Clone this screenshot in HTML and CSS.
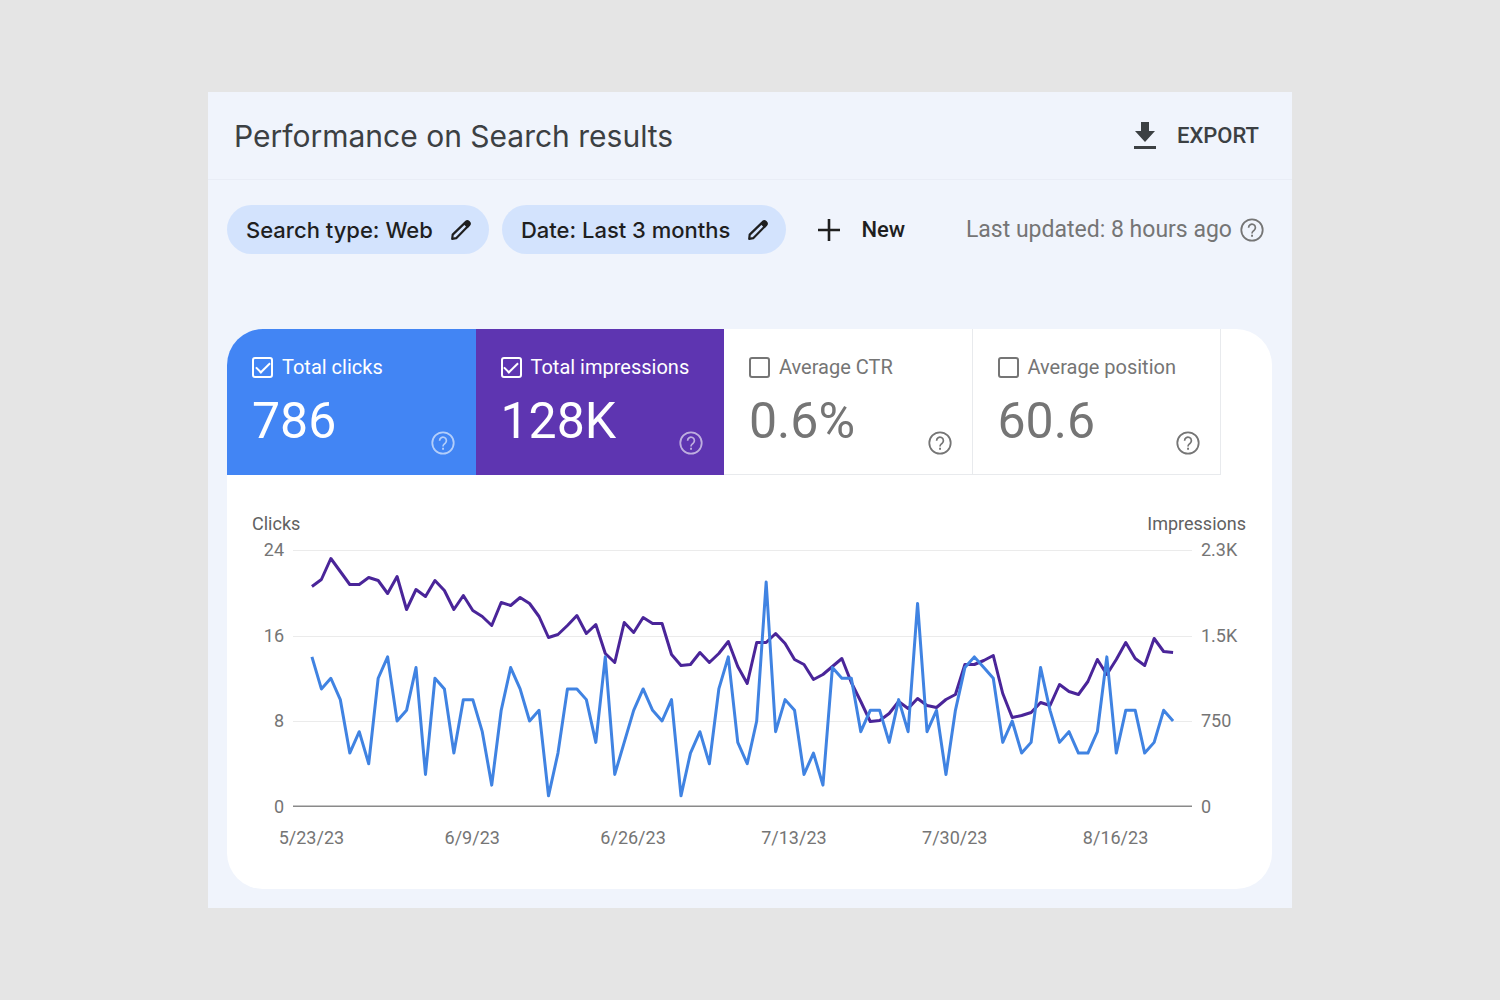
FILE: index.html
```html
<!DOCTYPE html>
<html lang="en">
<head>
  <meta charset="UTF-8" />
  <meta name="viewport" content="width=device-width, initial-scale=1.0" />
  <title>Performance on Search results</title>
  <link rel="stylesheet" href="styles.css">
</head>
<body>
  <svg class="sprite" aria-hidden="true">
    <symbol id="help" viewBox="0 0 24 24">
      <circle cx="12" cy="12" r="10.7" fill="none" stroke="currentColor" stroke-width="1.8" />
      <path d="M8.6 9.7a3.4 3.4 0 1 1 5.5 2.6c-1.2 1-2.1 1.5-2.1 3.1" fill="none" stroke="currentColor" stroke-width="1.7" />
      <path d="M11.1 16.8h1.9v2h-1.9z" fill="currentColor" />
    </symbol>
    <symbol id="pencil" viewBox="0 0 24 24">
      <path d="M3.2 20.8l.5-4.2L16.9 3.9a2 2 0 0 1 2.8 0l.4.4a2 2 0 0 1 0 2.8L7.2 20.2z" fill="none" stroke="currentColor" stroke-width="2.2" stroke-linejoin="round" />
      <path d="M14 5.6l4.6 4.6 2.6-3-.8-3.4-3.4-.6z" fill="currentColor" />
    </symbol>
  </svg>

  <main class="panel">
    <header class="header">
      <h1>Performance on Search results</h1>
      <button class="export-btn" type="button">
        <svg width="24" height="28" viewBox="0 0 24 28" aria-hidden="true">
          <path d="M8 0h8v9h6L12 20 2 9h6zM1 24h22v3H1z" fill="currentColor" />
        </svg>
        EXPORT
      </button>
    </header>

    <div class="filters">
      <button class="chip" type="button">Search type: Web
        <svg class="icon" aria-hidden="true"><use href="#pencil" /></svg>
      </button>
      <button class="chip" type="button">Date: Last 3 months
        <svg class="icon" aria-hidden="true"><use href="#pencil" /></svg>
      </button>
      <button class="new-btn" type="button">
        <svg class="icon" viewBox="0 0 24 24" aria-hidden="true">
          <path d="M12 1v22M1 12h22" stroke="currentColor" stroke-width="2.6" />
        </svg>
        New
      </button>
      <p class="updated">Last updated: 8 hours ago
        <svg class="icon" aria-hidden="true"><use href="#help" /></svg>
      </p>
    </div>

    <section class="card">
      <div class="metrics">
        <div class="metric clicks">
          <label><input type="checkbox" checked /> Total clicks</label>
          <strong>786</strong>
          <button class="help-btn" type="button" aria-label="About total clicks"><svg class="icon"><use href="#help" /></svg></button>
        </div>
        <div class="metric impressions">
          <label><input type="checkbox" checked /> Total impressions</label>
          <strong>128K</strong>
          <button class="help-btn" type="button" aria-label="About total impressions"><svg class="icon"><use href="#help" /></svg></button>
        </div>
        <div class="metric">
          <label><input type="checkbox" /> Average CTR</label>
          <strong>0.6%</strong>
          <button class="help-btn" type="button" aria-label="About average CTR"><svg class="icon"><use href="#help" /></svg></button>
        </div>
        <div class="metric">
          <label><input type="checkbox" /> Average position</label>
          <strong>60.6</strong>
          <button class="help-btn" type="button" aria-label="About average position"><svg class="icon"><use href="#help" /></svg></button>
        </div>
      </div>

      <div class="axis-titles"><span>Clicks</span><span>Impressions</span></div>
      <div class="chart">
        <div class="scale left"><span>24</span><span>16</span><span>8</span><span>0</span></div>
        <svg class="plot" viewBox="-2 0 95 257" preserveAspectRatio="none" role="img" aria-label="Clicks and impressions per day">
          <path class="grid-line" d="M-2 .5H93M-2 86.5H93M-2 171.5H93" />
          <path class="base-line" d="M-2 256.5H93" />
          <polyline id="impressionsLine" class="line line-impressions" />
          <polyline id="clicksLine" class="line line-clicks" />
        </svg>
        <div class="scale"><span>2.3K</span><span>1.5K</span><span>750</span><span>0</span></div>
      </div>
      <div class="dates">
        <span>5/23/23</span><span>6/9/23</span><span>6/26/23</span><span>7/13/23</span><span>7/30/23</span><span>8/16/23</span>
      </div>
    </section>
  </main>

  <script>
    const plotHeight = 256.5;

    // one value per day, starting 5/23/23
    const clicks = [
      14, 11, 12, 10, 5, 7, 4, 12, 14, 8, 9, 13, 3, 12, 11, 5, 10, 10, 7, 2,
      9, 13, 11, 8, 9, 1, 5, 11, 11, 10, 6, 14, 3, 6, 9, 11, 9, 8, 10, 1,
      5, 7, 4, 11, 14, 6, 4, 8, 21, 7, 10, 9, 3, 5, 2, 13, 12, 12, 7, 9,
      9, 6, 10, 7, 19, 7, 9, 3, 9, 13, 14, 13, 12, 6, 8, 5, 6, 13, 9, 6,
      7, 5, 5, 7, 14, 5, 9, 9, 5, 6, 9, 8
    ];

    // scaled so that 256.5 is the top of the axis
    const impressions = [
      220, 227, 248, 235, 222, 222, 229, 226, 213, 230, 197, 217, 210, 226, 216, 197, 211, 196, 190, 181,
      204, 201, 209, 203, 190, 169, 172, 181, 191, 173, 182, 153, 144, 184, 174, 189, 183, 183, 152, 141,
      142, 154, 144, 153, 165, 140, 123, 164, 164, 173, 163, 147, 142, 127, 132, 140, 148, 124, 105, 85,
      86, 93, 105, 98, 108, 101, 99, 107, 112, 142, 142, 146, 151, 113, 89, 91, 94, 104, 101, 122,
      115, 112, 125, 147, 132, 147, 164, 148, 141, 168, 155, 154
    ];

    function drawLine(id, values, max) {
      const points = values.map((value, day) => `${day},${plotHeight - value / max * plotHeight}`);
      document.getElementById(id).setAttribute('points', points.join(' '));
    }

    drawLine('impressionsLine', impressions, 256.5);
    drawLine('clicksLine', clicks, 24);
  </script>
</body>
</html>
```
FILE: styles.css
```css
* {
  box-sizing: border-box;
  margin: 0;
  padding: 0;
}

body {
  display: flex;
  align-items: center;
  justify-content: center;
  min-height: 100vh;
  background: #e5e5e5;
  color: #757575;
  font-family: Roboto, sans-serif;
}

button {
  border: none;
  background: none;
  font: inherit;
  color: inherit;
  cursor: pointer;
}

.sprite {
  position: absolute;
  width: 0;
  height: 0;
}

.icon {
  display: block;
  flex: none;
  width: 24px;
  height: 24px;
}

.panel {
  width: 100%;
  max-width: 1084px;
  padding-bottom: 19px;
  background: #f0f4fc;
}

.header {
  display: flex;
  align-items: center;
  justify-content: space-between;
  height: 88px;
  padding: 0 33px 0 26px;
  border-bottom: 1px solid #e9edf6;
}

h1 {
  font-family: Inter, sans-serif;
  font-size: 30px;
  font-weight: 400;
  color: #3c4043;
}

.export-btn {
  display: flex;
  align-items: center;
  gap: 20px;
  font-size: 22px;
  font-weight: 500;
  color: #3c4043;
}

.filters {
  display: flex;
  align-items: center;
  gap: 13px;
  padding: 25px 28px 75px 19px;
}

.chip {
  display: flex;
  align-items: center;
  gap: 16px;
  height: 49px;
  padding: 0 16px 0 19px;
  border-radius: 25px;
  background: #d3e3fd;
  color: #1f1f1f;
  font-family: Inter, sans-serif;
  font-size: 22px;
  font-weight: 500;
  white-space: nowrap;
}

.new-btn {
  display: flex;
  align-items: center;
  gap: 20px;
  margin-left: 18px;
  color: #1f1f1f;
  font-size: 22px;
  font-weight: 500;
}

.updated {
  display: flex;
  align-items: center;
  gap: 8px;
  margin-left: auto;
  font-size: 23px;
  white-space: nowrap;
}

.card {
  margin: 0 20px 0 19px;
  padding-bottom: 41px;
  border-radius: 36px;
  background: #fff;
  overflow: hidden;
}

.metrics {
  display: grid;
  grid-template-columns: repeat(4, 1fr);
  margin-right: 51px;
}

.metric {
  display: grid;
  grid-template-columns: 1fr auto;
  align-content: start;
  height: 146px;
  padding: 26px 20px 0 25px;
  border-right: 1px solid #e8eaed;
  border-bottom: 1px solid #e8eaed;
}

.metric.clicks {
  border-color: #4285f4;
  background: #4285f4;
  color: #fff;
}

.metric.impressions {
  border-color: #5e35b1;
  background: #5e35b1;
  color: #fff;
}

.metric label {
  display: flex;
  grid-column: 1 / 3;
  align-items: center;
  gap: 9px;
  font-size: 20px;
  line-height: 24px;
  white-space: nowrap;
}

.metric input {
  display: grid;
  place-content: center;
  width: 21px;
  height: 21px;
  border: 2px solid currentColor;
  border-radius: 3px;
  color: inherit;
  appearance: none;
}

.metric input:checked::after {
  content: "";
  width: 12px;
  height: 6px;
  margin-bottom: 3px;
  border: solid currentColor;
  border-width: 0 0 2px 2px;
  transform: rotate(-45deg);
}

.metric strong {
  font-size: 50px;
  font-weight: 400;
  line-height: 60px;
  padding: 12px 0 4px;
}

.help-btn {
  align-self: end;
}

.clicks .help-btn,
.impressions .help-btn {
  opacity: 0.6;
}

.axis-titles {
  display: flex;
  justify-content: space-between;
  padding: 39px 26px 6px 25px;
  color: #616161;
  font-size: 18px;
  line-height: 20px;
}

.chart {
  display: grid;
  grid-template-columns: 57px 1fr 71px;
  gap: 9px;
  font-size: 18px;
  line-height: 20px;
}

.scale {
  display: flex;
  flex-direction: column;
  justify-content: space-between;
}

.scale.left {
  text-align: right;
}

.plot {
  display: block;
  width: 100%;
  height: 277px;
  padding: 10px 0;
}

.plot * {
  fill: none;
  vector-effect: non-scaling-stroke;
}

.grid-line {
  stroke: #ebebeb;
}

.base-line {
  stroke: #8a8a8a;
  stroke-width: 2px;
}

.line {
  stroke-width: 3px;
  stroke-linejoin: round;
}

.line-clicks {
  stroke: #4083e2;
}

.line-impressions {
  stroke: #4a2599;
}

.dates {
  display: grid;
  grid-template-columns: repeat(6, 1fr);
  padding: 11px 76px 0 4px;
  font-size: 18px;
  line-height: 20px;
  text-align: center;
}
```
